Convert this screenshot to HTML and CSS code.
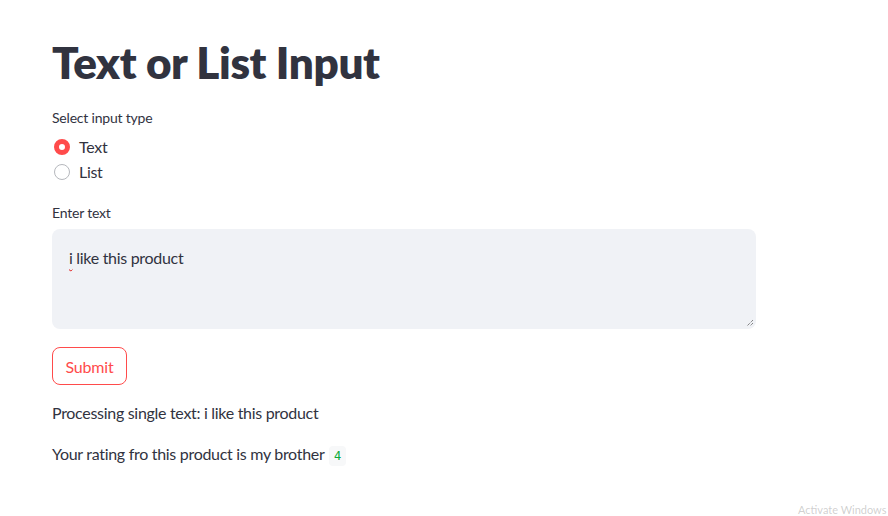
FILE: index.html
```html
<!DOCTYPE html>
<html>
<head>
<meta charset="utf-8">
<link rel="stylesheet" href="styles.css">
</head>
<body>
<main class="block">
  <h1 class="title">Text or List Input</h1>

  <div class="widget radio-widget">
    <div class="label">Select input type</div>
    <div class="radios">
      <label class="radio"><span class="dot checked"></span><span>Text</span></label>
      <label class="radio"><span class="dot"></span><span>List</span></label>
    </div>
  </div>

  <div class="widget text-widget">
    <div class="label">Enter text</div>
    <div class="textarea">
      <span class="typed"><span class="spell">i</span> like this product</span>
      <svg class="grip" width="8" height="8" viewBox="0 0 8 8"><path d="M7 1L1 7M7 4L4 7" stroke="#555" stroke-width="1" stroke-dasharray="1 1"/></svg>
    </div>
  </div>

  <div class="widget btn-widget">
    <button class="btn">Submit</button>
  </div>

  <p class="para">Processing single text: i like this product</p>
  <p class="para">Your rating fro this product is my brother <code class="code">4</code></p>
</main>
<div class="watermark">Activate Windows</div>
</body>
</html>
```
FILE: styles.css
```css
html, body {
  margin: 0;
  padding: 0;
  background: #ffffff;
}
body {
  font-family: Lato, "Noto Sans", sans-serif;
  color: #31333f;
  width: 888px;
  height: 516px;
  overflow: hidden;
  position: relative;
}
.block {
  width: 704px;
  padding: 34px 0 0 52px;
  display: flex;
  flex-direction: column;
}
.title {
  margin: 0;
  font-size: 44px;
  font-weight: 800;
  line-height: 56px;
  letter-spacing: -0.4px;
  color: #31333f;
}
.label {
  font-size: 14px;
  line-height: 20px;
  height: 20px;
  color: #31333f;
  letter-spacing: -0.2px;
}
.radio-widget {
  margin-top: 18px;
}
.radio-widget .label {
  margin-bottom: 9px;
}
.radios {
  display: flex;
  flex-direction: column;
  gap: 5px;
}
.radio {
  display: flex;
  align-items: center;
  gap: 9px;
  font-size: 16px;
  line-height: 20px;
  height: 20px;
  padding-left: 2px;
  letter-spacing: -0.3px;
}
.dot {
  box-sizing: border-box;
  width: 16px;
  height: 16px;
  border-radius: 50%;
  border: 1px solid #b6b8bd;
  background: #fff;
}
.dot.checked {
  border: 5px solid #ff4b4b;
  background: #fff;
}
.text-widget {
  margin-top: 21px;
}
.text-widget .label {
  margin-bottom: 6px;
}
.textarea {
  position: relative;
  box-sizing: border-box;
  height: 100px;
  width: 704px;
  background: #f0f2f6;
  border-radius: 8px;
  padding: 18px 17px;
  font-size: 16px;
  line-height: 22px;
  letter-spacing: -0.3px;
}
.spell {
  text-decoration: underline wavy #e02020;
  text-decoration-thickness: 1px;
  text-underline-offset: 3px;
}
.grip {
  position: absolute;
  right: 2px;
  bottom: 2px;
}
.btn-widget {
  margin-top: 18px;
}
.btn {
  font-family: inherit;
  font-size: 16px;
  color: #ff4b4b;
  background: #fff;
  border: 1px solid #ff4b4b;
  border-radius: 8px;
  height: 38px;
  width: 75px;
  padding: 0;
  letter-spacing: -0.2px;
  cursor: pointer;
}
.para {
  margin: 16px 0 0;
  font-size: 16px;
  line-height: 24px;
  letter-spacing: -0.3px;
}
.para + .para {
  margin-top: 17px;
}
.code {
  font-family: "DejaVu Sans Mono", monospace;
  font-size: 12px;
  letter-spacing: 0;
  color: #09ab3b;
  background: #f7f8f9;
  border-radius: 4px;
  padding: 3px 5px;
  margin-left: 1px;
}
.watermark {
  position: absolute;
  left: 798px;
  bottom: 0;
  font-size: 11px;
  line-height: 12px;
  color: rgba(150, 150, 150, 0.45);
  white-space: nowrap;
}
```
